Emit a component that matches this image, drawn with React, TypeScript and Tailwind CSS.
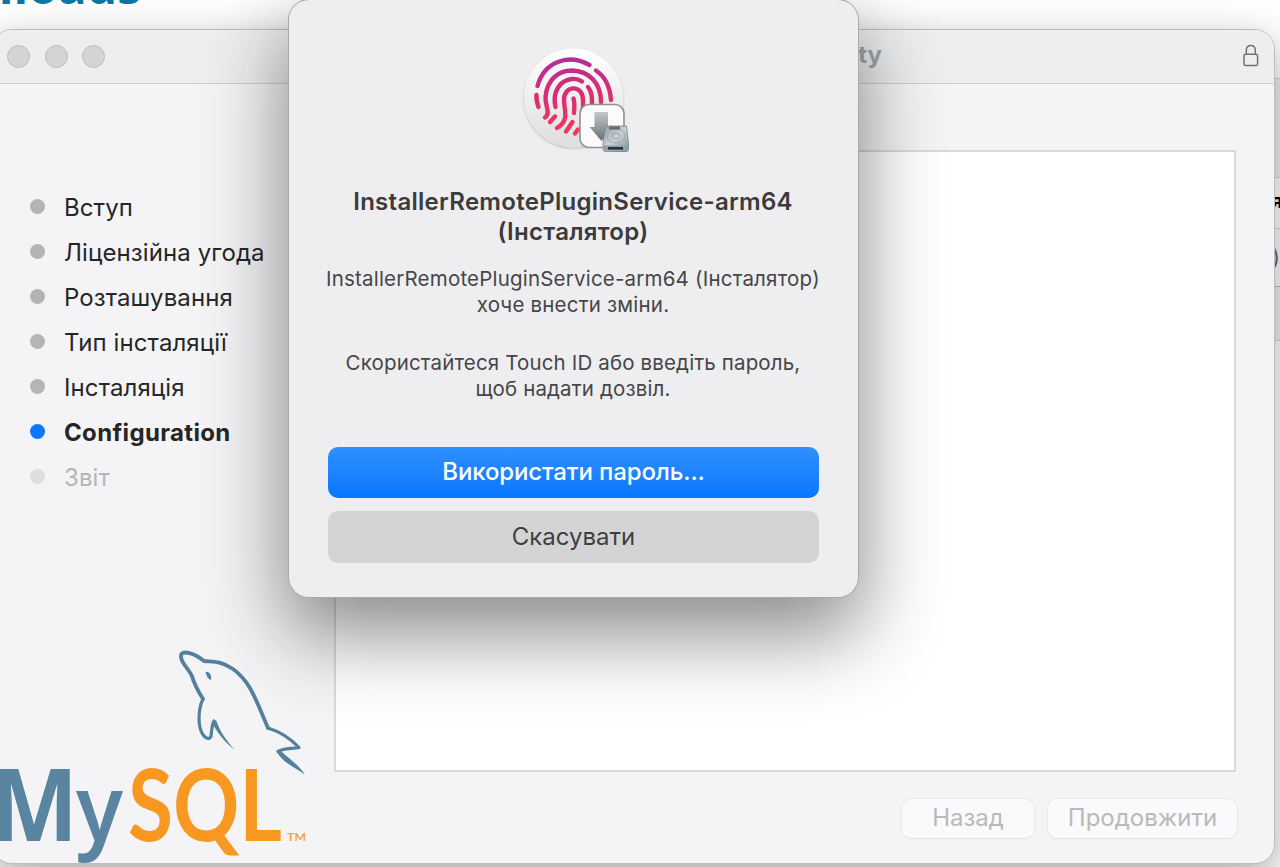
import React from "react";

const steps = [
  { label: "Вступ", state: "done" },
  { label: "Ліцензійна угода", state: "done" },
  { label: "Розташування", state: "done" },
  { label: "Тип інсталяції", state: "done" },
  { label: "Інсталяція", state: "done" },
  { label: "Configuration", state: "active" },
  { label: "Звіт", state: "pending" },
];

const dotStyles: Record<string, string> = {
  done: "bg-[#b4b4b6]",
  active: "bg-[#0a77ff]",
  pending: "bg-[#dedee0]",
};

const labelStyles: Record<string, string> = {
  done: "tracking-[0.1px] text-[#262627]",
  active: "font-bold tracking-[0.35px] text-[#262627]",
  pending: "tracking-[0.1px] text-[#b5b5b7]",
};

function TrafficLights() {
  return (
    <div className="flex gap-[14.5px]">
      {[0, 1, 2].map((i) => (
        <span key={i} className="size-[23px] rounded-full border border-[#bcbcbe] bg-[#d4d4d6]" />
      ))}
    </div>
  );
}

function LockIcon() {
  return (
    <svg className="-mt-[2px]" width="18" height="24" viewBox="0 0 18 24" fill="none" stroke="#717173" strokeWidth="1.5">
      <rect x="2" y="10.3" width="13.6" height="11.2" rx="1.6" />
      <path d="M4.3 10.3V6.4C4.3 3.3 6.2 1.5 8.8 1.5s4.5 1.8 4.5 4.9v3.9" />
    </svg>
  );
}

function MySqlLogo() {
  return (
    <svg width="320" height="220" viewBox="0 643 320 220">
      <g fill="none" stroke="#54809b" strokeLinejoin="round" strokeLinecap="round">
        <path
          strokeWidth="3.8"
          d="M203 699C198 691 194 684 192 676C188 668 180 662 181 655C183 650 194 653 204 661C214 662 221 661 233 669C250 681 256 700 268 728"
        />
        <path strokeWidth="3.2" d="M268 728C281 732 290 738 299 747.500C291 749 284 748 278 751.500" />
        <path strokeWidth="3.2" d="M203 699C199 707 197 723 202 733C205 739 210 740 211 736C212 728 212 724 214 721" />
      </g>
      <g fill="#54809b">
        <path d="M276.500 751C281 761 292 766 305 774.500C297 763 289 759 281 751Z" />
        <path d="M212.500 723C217 733 225 742 235 750.500C227 741 220 732 216 720Z" />
        <path d="M205.500 672C209 671 212 675 211 680C208 679 207 677 205.500 672Z" />
      </g>
      <g className="font-['Noto_Sans'] font-bold" fill="#5985a1">
        <text x="-9" y="841" fontSize="100" textLength="87" lengthAdjust="spacingAndGlyphs">
          M
        </text>
        <text x="76" y="841" fontSize="93" textLength="47" lengthAdjust="spacingAndGlyphs" className="font-semibold">
          y
        </text>
      </g>
      <g className="font-['Lato'] font-bold">
        <text x="128" y="841" fontSize="99" textLength="154" lengthAdjust="spacingAndGlyphs" fill="#f89820">
          SQL
        </text>
        <text x="287" y="841" fontSize="12" textLength="19" lengthAdjust="spacingAndGlyphs" fill="#f5a54a">
          TM
        </text>
      </g>
    </svg>
  );
}

function TouchIdIcon() {
  return (
    <svg width="130" height="125" viewBox="0 0 130 125">
      <defs>
        <linearGradient id="disc" x1="0" y1="0" x2="0" y2="1">
          <stop offset="0" stopColor="#ffffff" />
          <stop offset="1" stopColor="#dedee0" />
        </linearGradient>
        <linearGradient id="print" gradientUnits="userSpaceOnUse" x1="0" y1="18" x2="0" y2="96">
          <stop offset="0" stopColor="#b0309b" />
          <stop offset="0.45" stopColor="#d92d72" />
          <stop offset="1" stopColor="#f3385c" />
        </linearGradient>
        <linearGradient id="arrow" x1="0" y1="0" x2="0" y2="1">
          <stop offset="0" stopColor="#c3c9cb" />
          <stop offset="1" stopColor="#657075" />
        </linearGradient>
        <linearGradient id="drive" x1="0" y1="0" x2="1" y2="1">
          <stop offset="0" stopColor="#94a0a4" />
          <stop offset="0.5" stopColor="#cad2d5" />
          <stop offset="1" stopColor="#829095" />
        </linearGradient>
        <filter id="soft" x="-20%" y="-20%" width="140%" height="140%">
          <feDropShadow dx="0" dy="1" stdDeviation="1" floodColor="#000" floodOpacity="0.25" />
        </filter>
      </defs>
      <circle cx="63.500" cy="58" r="49.500" fill="url(#disc)" filter="url(#soft)" />
      <g fill="none" stroke="url(#print)" strokeWidth="4.4" strokeLinecap="round">
        <path d="M27.500 46C34 22 58 13 79.500 25" />
        <path d="M86 30.500C96 37 100 48 101 60" />
        <path d="M26.500 55C26 60 27 63 28.500 67" />
        <path d="M35 77.500C41 73 35 66 35.500 57C37 39 49 30.500 62 30.500C79 31 91 43 91 62" />
        <path d="M40 82L45 76.500" />
        <path d="M45.500 67C42 52 50 40 62 39C66 38.600 69 39.500 72 41.500" />
        <path d="M78 47C82 52 82 57 82 63" />
        <path d="M47 88C60 80 54 70 54 60C54 44.500 73 44.500 73 60V70" />
        <path d="M63.500 58.500C65 64 64.500 68 64 73" />
        <path d="M56 91.500L62.500 82" />
        <path d="M65 93.500L68 89.500" />
      </g>
      <rect x="70" y="64.500" width="44" height="43" rx="9" fill="#fbfbfc" stroke="#919193" strokeWidth="1.600" />
      <path d="M84.500 72H98V87H103.500L91.500 101L79.500 87H84.500Z" fill="url(#arrow)" />
      <path d="M95.500 86H116.500L118.500 104V109.500Q118.500 111.500 116.500 111.500H95Q93 111.500 93 109.500V104Z" fill="url(#drive)" stroke="#788388" strokeWidth="0.800" />
      <ellipse cx="106" cy="96" rx="9" ry="7" fill="none" stroke="#98a5aa" strokeWidth="0.900" />
      <ellipse cx="106" cy="96" rx="4" ry="3" fill="none" stroke="#98a5aa" strokeWidth="0.900" />
      <rect x="99" y="86.500" width="11" height="3" fill="#626e72" />
      <rect x="94" y="105.500" width="24" height="5" fill="#8fa0a6" />
      <rect x="98" y="107" width="15" height="2.600" fill="#29343a" />
    </svg>
  );
}

function BackgroundPage() {
  return (
    <>
      <div className="absolute right-[1139px] -top-[46px] whitespace-nowrap font-['Open_Sans'] text-[48px] font-bold leading-[64px] text-[#0d76a3]">
        Downloads
      </div>
      <div className="absolute left-[1260px] top-[78px] flex h-[789px] w-[40px] flex-col border-t border-[#d0d0d0]">
        <div className="h-[98px] bg-[#f0f0f0]" />
        <div className="flex h-[52px] items-center border-y border-[#d8d8d8] bg-white pb-[5px] pl-[11px] text-[20px] font-bold text-black">
          я
        </div>
        <div className="flex h-[58px] items-center border-b border-[#c4c4c4] bg-[#fcfcfc] pl-[12px] text-[22px] text-[#666668]">)</div>
        <div className="h-[54px] border-b border-[#d4d4d4] bg-[#f0f0f0]" />
        <div className="flex-1 bg-white" />
      </div>
    </>
  );
}

function InstallerWindow() {
  return (
    <section className="absolute -left-[8px] top-[29px] flex h-[835px] w-[1283px] flex-col overflow-hidden rounded-[20px] border border-[#bdbdbf] bg-[#f4f4f6] shadow-[0_14px_44px_rgba(0,0,0,0.34)]">
      <header className="flex h-[54px] shrink-0 items-center justify-between border-b border-[#cfcfd1] bg-[#edeef0] pl-[14px] pr-[14px]">
        <TrafficLights />
        <span className="-mt-[3px] ml-auto mr-[360px] text-[24px] font-bold text-[#a5a5a8]">ty</span>
        <LockIcon />
      </header>
      <div className="flex min-h-0 flex-1">
        <aside className="flex w-[341px] shrink-0 flex-col justify-between pt-[101px]">
          <ul className="pl-[37px]">
            {steps.map((s) => (
              <li key={s.label} className="flex h-[45px] items-center gap-[19px]">
                <span className={`-mt-[2px] size-[15px] rounded-full ${dotStyles[s.state]}`} />
                <span className={`whitespace-nowrap text-[24px] ${labelStyles[s.state]}`}>{s.label}</span>
              </li>
            ))}
          </ul>
          <div className="pl-[7px]">
            <MySqlLogo />
          </div>
        </aside>
        <div className="flex flex-1 flex-col pt-[66px]">
          <div className="mr-[38px] h-[622px] shrink-0 border-2 border-[#d9d9db] bg-white" />
          <div className="mr-[37px] flex justify-end gap-[14px] pt-[27px] text-[24px] text-[#b9b9bb]">
            <button className="h-[39px] w-[132px] rounded-[9px] bg-[#fafafc] pb-[2px] leading-[36px] shadow-[0_0_1px_1px_#e9e9eb,0_1px_1px_#d8d8da]">Назад</button>
            <button className="h-[39px] w-[189px] rounded-[9px] bg-[#fafafc] pb-[2px] leading-[36px] shadow-[0_0_1px_1px_#e9e9eb,0_1px_1px_#d8d8da]">Продовжити</button>
          </div>
        </div>
      </div>
    </section>
  );
}

function AuthDialog() {
  return (
    <section className="absolute left-[289px] top-0 flex h-[597px] w-[569px] flex-col items-center rounded-[20px] bg-[#eeeef0] px-[39px] pt-[40px] text-center shadow-[0_0_0_1px_#a9a9ab,0_34px_80px_4px_rgba(0,0,0,0.46)]">
      <div className="ml-[3px] h-[125px]">
        <TouchIdIcon />
      </div>
      <h1 className="-ml-px mt-[22px] text-[24px] font-semibold leading-[30px] tracking-[0.28px] text-[#3b3b3d]">
        <span className="block whitespace-nowrap">InstallerRemotePluginService-arm64</span>
        <span className="block whitespace-nowrap">(Інсталятор)</span>
      </h1>
      <p className="-ml-px mt-[19px] text-[20.500px] leading-[26px] tracking-[0.2px] text-[#464648]">
        <span className="block whitespace-nowrap">InstallerRemotePluginService-arm64 (Інсталятор)</span>
        <span className="block whitespace-nowrap">хоче внести зміни.</span>
      </p>
      <p className="-ml-px mt-[32px] text-[20.500px] leading-[26px] tracking-[0.15px] text-[#464648]">
        <span className="block whitespace-nowrap">Скористайтеся Touch ID або введіть пароль,</span>
        <span className="block whitespace-nowrap">щоб надати дозвіл.</span>
      </p>
      <button className="mt-[45px] h-[51px] w-[491px] shrink-0 rounded-[10px] bg-linear-to-b from-[#2e90ff] to-[#0577ff] pb-[2px] text-[24px] font-medium tracking-[-0.13px] text-white">
        Використати пароль...
      </button>
      <button className="mt-[13px] h-[52px] w-[491px] shrink-0 rounded-[10px] bg-[#d4d4d6] text-[24px] text-[#3f3f41]">
        Скасувати
      </button>
    </section>
  );
}

export default function App() {
  return (
    <main className="relative h-[867px] w-[1280px] overflow-hidden bg-white font-['Inter','Liberation_Sans',sans-serif]">
      <BackgroundPage />
      <InstallerWindow />
      <AuthDialog />
    </main>
  );
}
